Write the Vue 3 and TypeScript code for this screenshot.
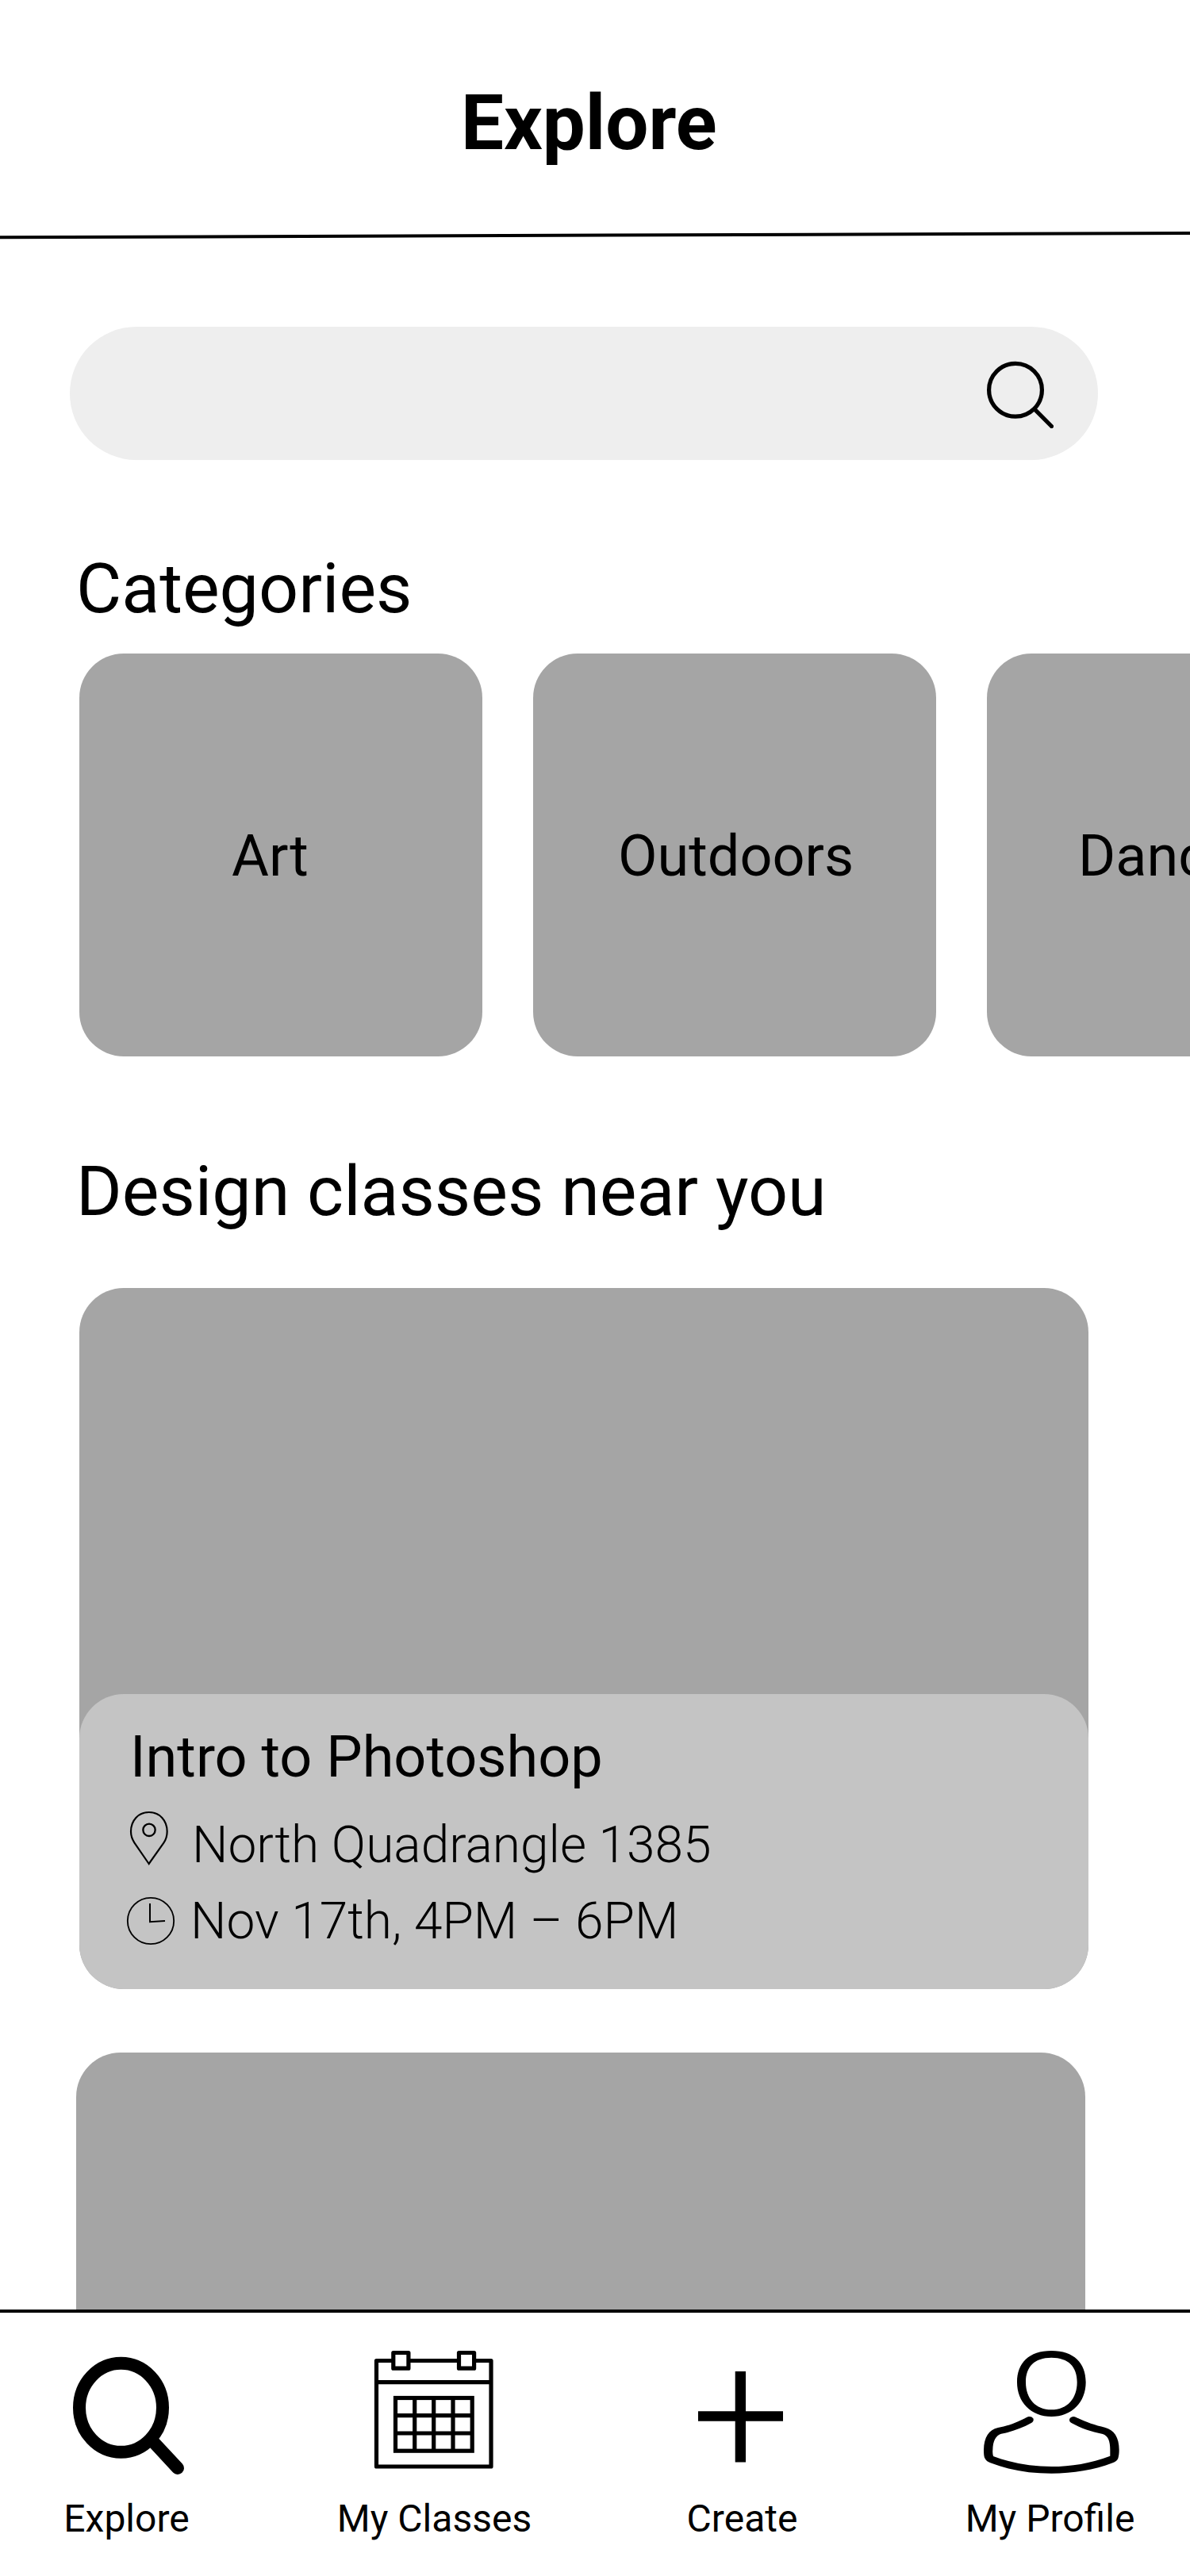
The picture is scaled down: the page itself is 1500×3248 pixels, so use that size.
<script setup lang="ts">
interface Category {
  name: string
  labelLeft: number
}

interface NavItem {
  id: 'explore' | 'classes' | 'create' | 'profile'
  label: string
}

// Tile labels sit slightly off-centre, so each keeps its own inset.
const categories: Category[] = [
  { name: 'Art', labelLeft: 192 },
  { name: 'Outdoors', labelLeft: 107 },
  { name: 'Dance', labelLeft: 115 },
]

const navItems: NavItem[] = [
  { id: 'explore', label: 'Explore' },
  { id: 'classes', label: 'My Classes' },
  { id: 'create', label: 'Create' },
  { id: 'profile', label: 'My Profile' },
]
</script>

<template>
  <div class="screen">
    <main class="content">
      <header class="header">
        <h1 class="title">Explore</h1>
        <svg class="rule" viewBox="0 0 1500 12" aria-hidden="true">
          <path d="M-4 8.3 L1504 3" stroke="#000" stroke-width="4" />
        </svg>
      </header>

      <div class="search">
        <svg class="search-icon" viewBox="0 0 88 88" fill="none" stroke="#000" stroke-width="5.2" stroke-linecap="round">
          <circle cx="40" cy="39.8" r="33.4" />
          <path d="M64.5 64.3 L85.5 85.5" />
        </svg>
      </div>

      <h2 class="heading categories-heading">Categories</h2>
      <div class="categories">
        <div v-for="c in categories" :key="c.name" class="category" :style="{ paddingLeft: c.labelLeft + 'px' }">
          {{ c.name }}
        </div>
      </div>

      <h2 class="heading classes-heading">Design classes near you</h2>
      <div class="classes">
        <article class="card">
          <div class="info">
            <h3 class="card-title">Intro to Photoshop</h3>
            <div class="row place">
              <svg class="row-icon" viewBox="0 0 60 75" fill="none" stroke="#000">
                <g transform="translate(-30 -29) scale(0.33333)" stroke-width="6.5">
                  <path d="M173 270 L118 190 C108 175 105 162 105 148 C105 106 133 75 173.500 75 C214 75 242 106 242 148 C242 165 238 178 229 191 Z" />
                  <circle cx="174" cy="142" r="23" stroke-width="7" />
                </g>
              </svg>
              <span>North Quadrangle 1385</span>
            </div>
            <div class="row time">
              <svg class="row-icon" viewBox="0 0 60 75" fill="none" stroke="#000">
                <g transform="translate(-30 -125) scale(0.33333)" stroke-width="6">
                  <circle cx="180" cy="486" r="87.500" stroke-width="5.5" />
                  <path d="M177 420 V489.500 L234 486" />
                </g>
              </svg>
              <span>Nov 17th, 4PM – 6PM</span>
            </div>
          </div>
        </article>
        <article class="card next"></article>
      </div>
    </main>

    <nav class="nav">
      <div class="nav-grid">
        <div v-for="item in navItems" :key="item.id" class="nav-item">
          <svg v-if="item.id === 'explore'" class="nav-icon" viewBox="0 0 180 164" fill="none" stroke="#000" stroke-width="16">
            <ellipse cx="81.5" cy="75.8" rx="52.5" ry="56" />
            <path d="M122 118.600 L153 152" stroke-linecap="round" />
          </svg>
          <svg v-else-if="item.id === 'classes'" class="nav-icon" viewBox="0 0 180 164" fill="none" stroke="#000" stroke-width="5.2" stroke-linejoin="round">
            <rect x="15.5" y="16.5" width="144.5" height="133.500" />
            <path d="M15.5 43.700 H160" />
            <g fill="#fff">
              <rect x="36.800" y="6.500" width="19.100" height="19.700" />
              <rect x="119.500" y="6.500" width="19.100" height="19.700" />
            </g>
            <g stroke-linejoin="miter">
              <rect x="39.500" y="63.500" width="96.700" height="66.700" />
              <path d="M63.700 63.500 V130 M87.700 63.500 V130 M112 63.500 V130 M39.500 85.700 H136 M39.500 108 H136" />
            </g>
          </svg>
          <svg v-else-if="item.id === 'create'" class="nav-icon" viewBox="0 0 180 164">
            <path d="M79.700 30 H93 V80.200 H140 V92.700 H93 V144.500 H79.700 V92.700 H33 V80.200 H79.700 Z" />
          </svg>
          <svg v-else class="nav-icon" viewBox="0 0 180 164">
            <g transform="translate(-35 -70) scale(0.33333)" fill-rule="evenodd">
              <path d="M376 222 C461 222 506 268 506 341 C506 416 453 471 376 471 C299 471 246 416 246 341 C246 268 291 222 376 222 Z M376 248 C311 248 279 283 279 341 C279 402 316 445 376 445 C436 445 473 402 473 341 C473 283 441 248 376 248 Z" />
              <path d="M287 472 C247 493 211 507 174 513 C139 521 121 549 120 597 C120 612 121 624 125 630 C129 638 136 642 145 646 C215 673 293 686 376 686 C459 686 537 673 608 646 C618 642 625 636 628 629 C631 620 632 610 632 597 C632 549 613 521 578 512 C541 504 508 492 468 473 C461 469 450 470 445 479 C442 486 446 493 453 496 C488 515 526 529 570 537 C590 543 598 563 598 597 L598 620 C524 648 450 660 376 660 C302 660 228 648 156 621 C154 613 153 605 154 597 C155 562 165 543 186 536 C229 528 265 514 300 495 C307 491 310 484 307 478 C303 471 294 469 287 472 Z" />
            </g>
          </svg>
          <span class="nav-label">{{ item.label }}</span>
        </div>
      </div>
    </nav>
  </div>
</template>

<style>
body {
  margin: 0;
  background: #fff;
}
</style>

<style scoped>
.screen {
  display: flex;
  flex-direction: column;
  width: 1500px;
  height: 3248px;
  overflow: hidden;
  background: #fff;
  color: #000;
  font-family: Roboto, sans-serif;
  font-weight: 400;
}

.screen svg {
  display: block;
  flex: none;
}

h1,
h2,
h3 {
  margin: 0;
  font-weight: 400;
  white-space: nowrap;
}

.content {
  display: flex;
  flex-direction: column;
  flex: none;
  height: 2912px;
  overflow: hidden;
}

.header {
  flex: none;
  padding-top: 99px;
}

.title {
  padding-left: 581px;
  font-size: 96px;
  line-height: 112px;
  font-weight: 700;
}

.rule {
  width: 1500px;
  height: 12px;
  margin-top: 80px;
}

.search {
  display: flex;
  flex: none;
  align-items: center;
  justify-content: flex-end;
  box-sizing: border-box;
  width: 1296px;
  height: 168px;
  margin: 109px 0 0 88px;
  padding-right: 56px;
  border-radius: 84px;
  background: #eee;
}

.search-icon {
  width: 88px;
  height: 88px;
}

.heading {
  flex: none;
  padding-left: 96px;
  font-size: 88px;
  line-height: 103px;
}

.categories-heading {
  margin-top: 110px;
}

.categories {
  display: flex;
  flex: none;
  gap: 64px;
  margin-top: 31px;
  padding-left: 100px;
}

.category {
  display: flex;
  flex: none;
  align-items: center;
  box-sizing: border-box;
  width: 508px;
  height: 508px;
  padding-top: 3px;
  border-radius: 56px;
  background: #a5a5a5;
  font-size: 72px;
  line-height: 85px;
}

.classes-heading {
  margin-top: 118px;
}

.classes {
  display: flex;
  flex: none;
  flex-direction: column;
  gap: 80px;
  margin-top: 71px;
  padding-left: 100px;
}

.card {
  display: flex;
  flex-direction: column;
  justify-content: flex-end;
  width: 1272px;
  height: 884px;
  border-radius: 56px;
  background: #a5a5a5;
}

.card.next {
  margin-left: -4px;
}

.info {
  box-sizing: border-box;
  height: 372px;
  padding: 37px 60px 0;
  border-radius: 56px;
  background: #c4c4c4;
}

.card-title {
  padding-left: 4px;
  font-size: 72px;
  line-height: 85px;
}

.row {
  display: flex;
  font-size: 64px;
  line-height: 75px;
  font-weight: 300;
  white-space: nowrap;
}

.place {
  gap: 22px;
  margin-top: 31px;
}

.time {
  gap: 20px;
  margin-top: 21px;
}

.row-icon {
  width: 60px;
  height: 75px;
  overflow: visible;
}

.nav {
  flex: none;
  box-sizing: border-box;
  height: 336px;
  border-top: 4px solid #000;
  overflow: hidden;
}

.nav-grid {
  display: grid;
  grid-template-columns: repeat(4, 388px);
  margin-left: -33px;
  padding-top: 44px;
}

.nav-item {
  display: flex;
  flex-direction: column;
  align-items: center;
}

.nav-icon {
  width: 180px;
  height: 164px;
}

.nav-label {
  margin-top: 23px;
  padding-right: 3px;
  font-size: 48px;
  line-height: 57px;
  white-space: nowrap;
}
</style>
